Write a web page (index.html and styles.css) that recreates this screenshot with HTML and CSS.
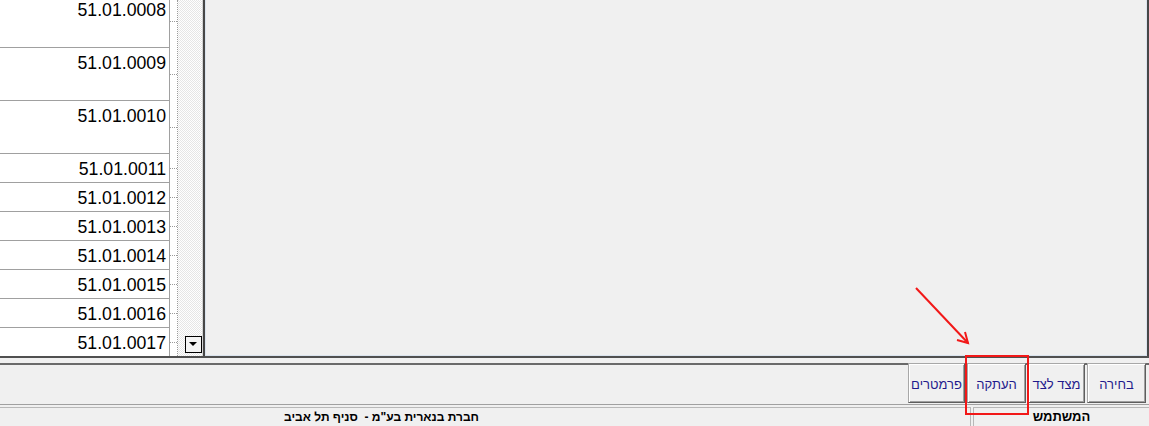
FILE: index.html
```
<!DOCTYPE html>
<html lang="he">

<head>
    <meta charset="UTF-8">
    <meta name="viewport" content="width=device-width, initial-scale=1.0">
    <title>Document</title>
    <link rel="stylesheet" href="styles.css">
</head>

<body>
    <div class="top">
        <div class="list">
            <div class="rows">
                <div class="row tall"><div class="cell">51.01.0008</div><div class="stub"></div></div>
                <div class="row tall"><div class="cell">51.01.0009</div><div class="stub"></div></div>
                <div class="row tall"><div class="cell">51.01.0010</div><div class="stub"></div></div>
                <div class="row"><div class="cell">51.01.0011</div><div class="stub"></div></div>
                <div class="row"><div class="cell">51.01.0012</div><div class="stub"></div></div>
                <div class="row"><div class="cell">51.01.0013</div><div class="stub"></div></div>
                <div class="row"><div class="cell">51.01.0014</div><div class="stub"></div></div>
                <div class="row"><div class="cell">51.01.0015</div><div class="stub"></div></div>
                <div class="row"><div class="cell">51.01.0016</div><div class="stub"></div></div>
                <div class="row"><div class="cell">51.01.0017</div><div class="stub"></div></div>
            </div>
        </div>
        <div class="track">
            <span class="arrowBtn"></span>
        </div>
        <div class="panel"></div>
    </div>

    <div class="toolbar" dir="rtl">
        <button class="btn w59">בחירה</button>
        <button class="btn w57">מצד לצד</button>
        <button class="btn w59">העתקה</button>
        <button class="btn w57">פרמטרים</button>
    </div>

    <div class="status">
        <div class="company" dir="rtl">חברת בנארית בע"מ -&nbsp; סניף תל אביב</div>
        <div class="user" dir="rtl">המשתמש</div>
    </div>

    <!-- סימון אדום -->
    <div class="mark"></div>
    <svg class="arrow" width="70" height="70" viewBox="0 0 70 70">
        <line x1="2" y1="2" x2="54" y2="57" stroke="#f21818" stroke-width="2"/>
        <polyline points="43,54 54,57 51,46" fill="none" stroke="#f21818" stroke-width="2"/>
    </svg>
</body>

</html>
```

FILE: styles.css
```
* {
    margin: 0;
    padding: 0;
    box-sizing: border-box;
}

body {
    position: relative;
    width: 1149px;
    height: 426px;
    overflow: hidden;
    background-color: #f0f0f0;
    font-family: "Liberation Sans", "DejaVu Sans", sans-serif;
}

.top {
    display: flex;
    height: 358px;
    border-bottom: 2px solid #505050;
}

.list {
    width: 178px;
    overflow: hidden;
    background-color: #fff;
    border-right: 1px dotted #9a9a9a;
}

.rows {
    margin-top: -5px;
}

.row {
    display: flex;
    height: 29px;
}

.row.tall {
    height: 53px;
}

.row .cell {
    width: 170px;
    border-right: 1px solid #a0a0a0;
    border-bottom: 1px solid #a0a0a0;
    padding: 5px 3px 0 0;
    text-align: right;
    font-size: 17.7px;
    line-height: 20px;
    color: #000;
}

.row .stub {
    flex: 1;
    display: flex;
    align-items: center;
}

.row .stub::before {
    content: "";
    width: 100%;
    border-top: 1px dotted #9a9a9a;
}

.track {
    width: 25px;
    display: flex;
    align-items: flex-end;
    justify-content: flex-end;
    padding-bottom: 3px;
    background: repeating-conic-gradient(#fff 0 25%, #e6e6e6 0 50%) 0 0 / 2px 2px;
    border-right: 1px solid #d4d4d4;
}

.arrowBtn {
    position: relative;
    width: 17px;
    height: 17px;
    border: 1px solid #000;
    background-color: #f4f4f4;
}

.arrowBtn::after {
    content: "";
    position: absolute;
    left: 3px;
    top: 5px;
    border-left: 4px solid transparent;
    border-right: 4px solid transparent;
    border-top: 4px solid #000;
}

.panel {
    flex: 1;
    background-color: #f0f0f0;
    border-left: 2px solid #474747;
    border-right: 2px solid #474747;
    box-shadow: inset 1px 0 #dbe4ee, inset -1px -1px #dbe4ee;
}

.toolbar {
    display: flex;
    gap: 2px;
    height: 42px;
    margin-top: 5px;
    padding-right: 3px;
    border-top: 2px solid #6a6a6a;
    border-bottom: 1px solid #a0a0a0;
}

.btn {
    height: 40px;
    margin-top: -2px;
    background-color: #f0f0f0;
    border: 1px solid;
    border-color: #a8a8a8 #5e5e5e #5e5e5e #a8a8a8;
    box-shadow: inset 1px 1px #fff, inset -1px -1px #a0a0a0;
    font-family: "Liberation Sans", "DejaVu Sans", sans-serif;
    font-size: 13px;
    color: #1f1a8c;
    padding-top: 3px;
}

.btn.w59 {
    width: 59px;
}

.btn.w57 {
    width: 57px;
}

.status {
    display: flex;
    height: 21px;
    margin-top: 2px;
}

.company {
    flex: 1;
    border-top: 1px solid #b8b8b8;
    border-right: 1px solid #b8b8b8;
    padding-right: 491px;
    font-size: 12px;
    font-weight: bold;
    line-height: 18px;
    color: #000;
}

.user {
    width: 176px;
    margin-left: 2px;
    border-top: 1px solid #b8b8b8;
    border-left: 1px solid #b8b8b8;
    text-align: center;
    font-size: 13px;
    font-weight: bold;
    line-height: 18px;
    color: #000;
}

.mark {
    position: absolute;
    left: 965px;
    top: 355px;
    width: 64px;
    height: 60px;
    border: 2px solid #f21818;
}

.arrow {
    position: absolute;
    left: 914px;
    top: 286px;
}
```
